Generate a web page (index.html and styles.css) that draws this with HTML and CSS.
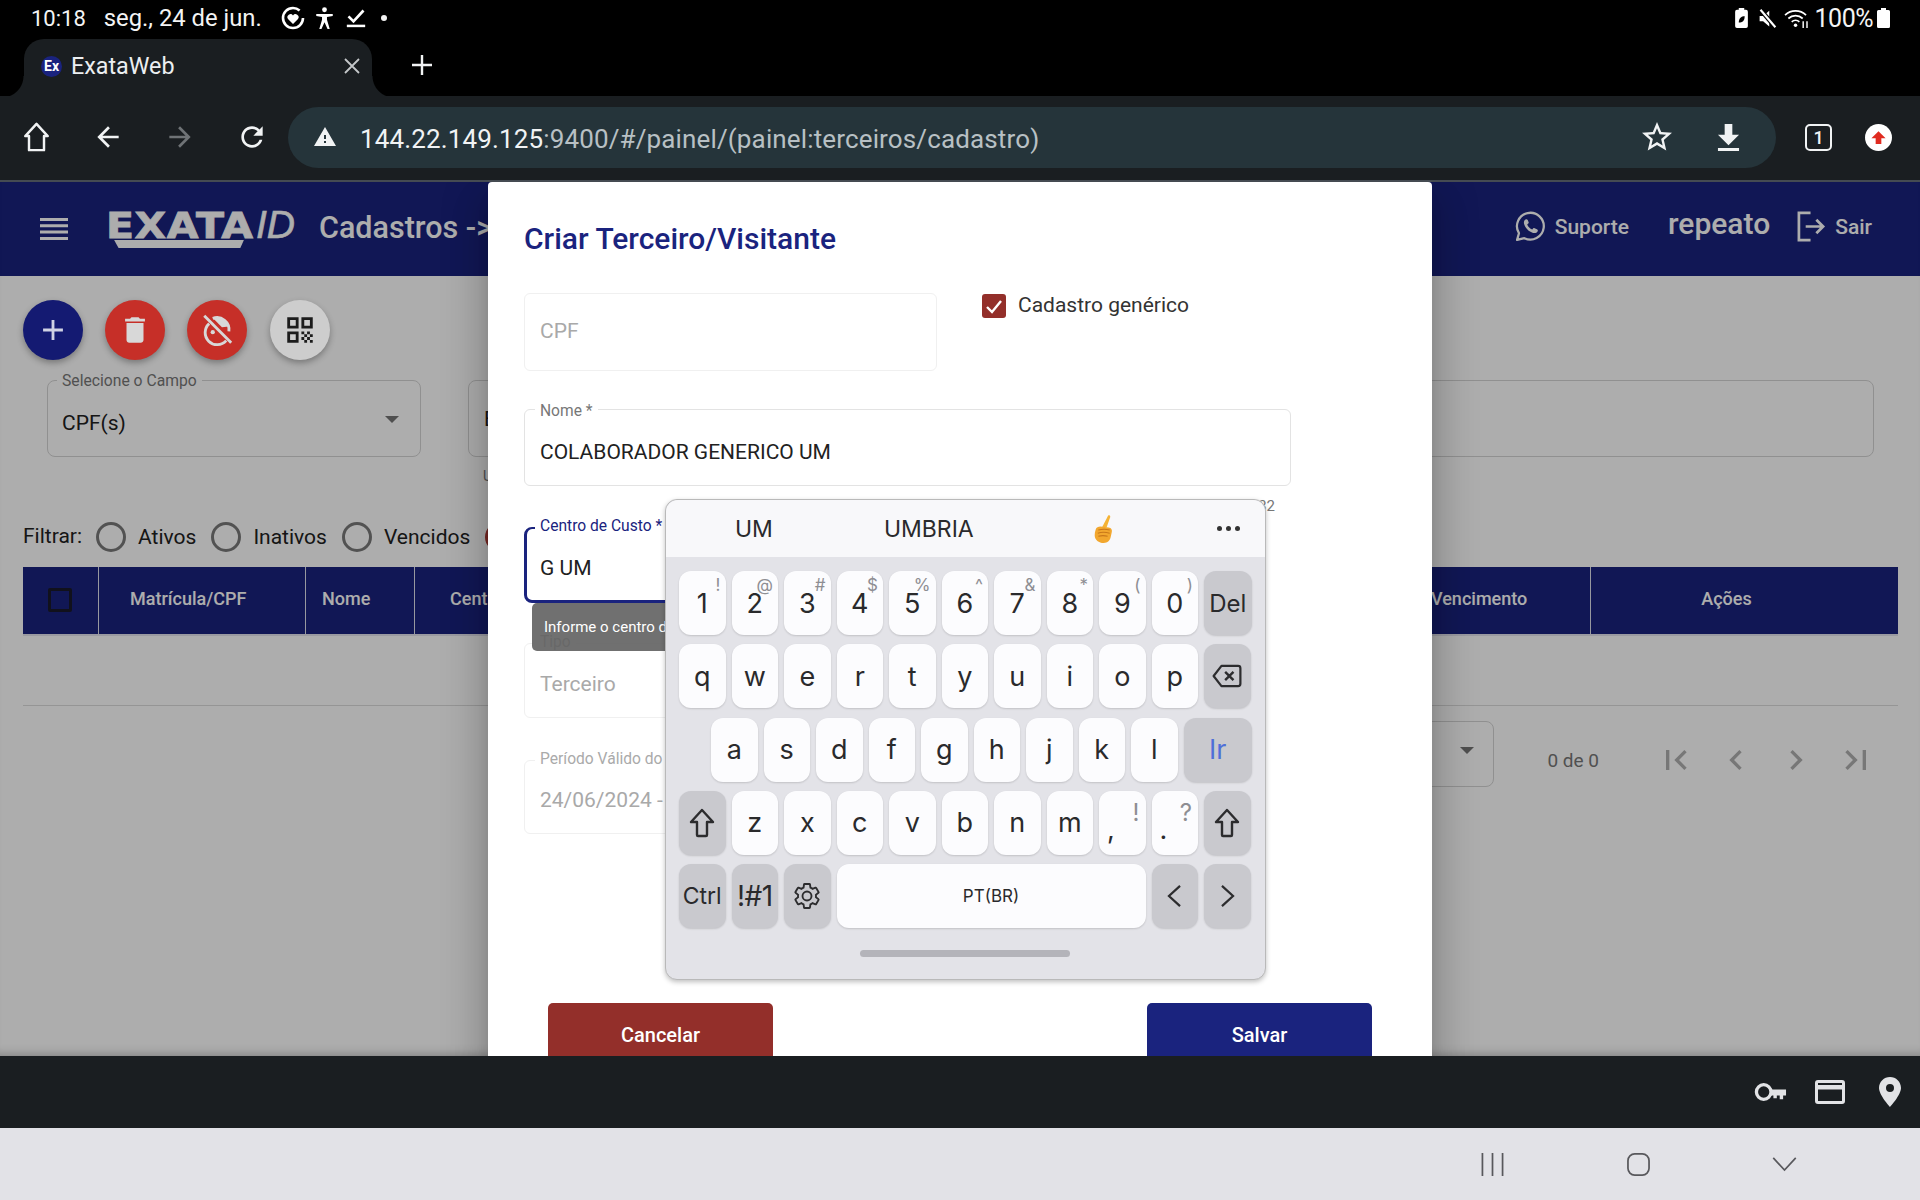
FILE: index.html
```html
<!DOCTYPE html>
<html lang="pt-BR">
<head>
  <meta charset="UTF-8">
  <meta name="viewport" content="width=device-width, initial-scale=1.0">
  <title>ExataWeb</title>
  <link rel="stylesheet" href="styles.css">
</head>
<body>

  <!-- Android status bar -->
  <div class="status-bar">
    <span class="clock">10:18</span>
    <span class="date">seg., 24 de jun.</span>
    <svg class="st-ico st-heart" viewBox="0 0 24 24"><circle cx="12" cy="12" r="10" fill="none" stroke="#fff" stroke-width="2.600" stroke-dasharray="54 9"/><path d="M12 18l-5-5a3 3 0 0 1 5-3.500 3 3 0 0 1 5 3.500z" fill="#fff"/></svg>
    <svg class="st-ico st-person" viewBox="0 0 18 24"><circle cx="9" cy="3" r="2.600" fill="#fff"/><path d="M0 7.500h18v2.200l-6.300 1.200V14l3 10h-2.400L9 16.500 5.700 24H3.300l3-10v-3.100L0 9.700z" fill="#fff"/></svg>
    <svg class="st-ico st-check" viewBox="0 0 24 24"><path d="M3 10l6 6L21 3" fill="none" stroke="#fff" stroke-width="3.200"/><path d="M1 20h22v3H1z" fill="#fff"/></svg>
    <span class="st-dot"></span>
    <div class="status-right">
      <svg class="st-batt-leaf" viewBox="0 0 14 22"><path d="M4 2V0h6v2h2a2 2 0 0 1 2 2v16a2 2 0 0 1-2 2H2a2 2 0 0 1-2-2V4a2 2 0 0 1 2-2z" fill="#fff"/><path d="M4 16c0-5 3-7 6.500-7 0 5-2.500 7-6.500 7z" fill="#000"/></svg>
      <svg class="st-mute" viewBox="0 0 24 24"><path d="M3 9h4l7-6v18l-7-6H3z" fill="#fff"/><path d="M4 2l17 20" stroke="#000" stroke-width="5"/><path d="M4 2l17 20" stroke="#fff" stroke-width="2.400"/></svg>
      <svg class="st-wifi" viewBox="0 0 26 22"><g fill="none" stroke="#fff" stroke-width="1.800"><path d="M1 7.500a16 16 0 0 1 22 0"/><path d="M4.500 11a11 11 0 0 1 15 0"/><path d="M8 14.500a6 6 0 0 1 8 0"/></g><circle cx="12" cy="18" r="1.800" fill="#fff"/><path d="M20 14v7M24 21v-7" stroke="#fff" stroke-width="1.500"/></svg>
      <span class="batt-text">100%</span>
      <svg class="st-batt" viewBox="0 0 13 20"><path d="M4 0h5v2h2.500A1.500 1.500 0 0 1 13 3.500v15a1.500 1.500 0 0 1-1.500 1.500h-10A1.500 1.500 0 0 1 0 18.500v-15A1.500 1.500 0 0 1 1.500 2H4z" fill="#fff"/></svg>
    </div>
  </div>

  <!-- Browser tabs -->
  <div class="tab-strip">
    <div class="tab">
      <span class="favicon">Ex</span>
      <span class="tab-title">ExataWeb</span>
      <svg class="tab-close" viewBox="0 0 16 16"><path d="M1 1l14 14M15 1L1 15" stroke="#c4c7c9" stroke-width="1.800"/></svg>
    </div>
    <svg class="tab-new" viewBox="0 0 22 22"><path d="M11 1v20M1 11h20" stroke="#f1f3f4" stroke-width="2.400"/></svg>
  </div>

  <!-- Browser toolbar -->
  <div class="toolbar">
    <svg class="tb-home" viewBox="0 0 28 32"><path d="M14 2L2 15h4v15h16V15h4z" fill="none" stroke="#f1f3f4" stroke-width="2.600" stroke-linejoin="round"/></svg>
    <svg class="tb-nav" viewBox="0 0 24 24"><path fill="#f1f3f4" d="M20 11H7.830l5.590-5.590L12 4l-8 8 8 8 1.410-1.410L7.830 13H20v-2z"/></svg>
    <svg class="tb-nav" viewBox="0 0 24 24"><path fill="#6f7376" d="M12 4l-1.410 1.410L16.170 11H4v2h12.170l-5.580 5.590L12 20l8-8z"/></svg>
    <svg class="tb-nav" viewBox="0 0 24 24"><path fill="#f1f3f4" d="M17.650 6.350C16.200 4.900 14.210 4 12 4c-4.420 0-7.990 3.580-7.990 8s3.570 8 7.990 8c3.730 0 6.840-2.550 7.730-6h-2.080c-.82 2.330-3.040 4-5.650 4-3.310 0-6-2.690-6-6s2.690-6 6-6c1.660 0 3.140.69 4.220 1.780L13 11h7V4l-2.350 2.350z"/></svg>
    <div class="url-bar">
      <svg class="url-warn" viewBox="0 0 24 24"><path fill="#f1f3f4" d="M1 21h22L12 2 1 21zm12-3h-2v-2h2v2zm0-4h-2v-4h2v4z"/></svg>
      <span class="url-text"><span class="url-host">144.22.149.125</span>:9400/#/painel/(painel:terceiros/cadastro)</span>
      <svg class="url-star" viewBox="0 0 24 24"><path fill="#f1f3f4" d="M22 9.240l-7.190-.62L12 2 9.190 8.630 2 9.240l5.460 4.730L5.820 21 12 17.270 18.180 21l-1.630-7.030L22 9.240zM12 15.400l-3.760 2.270 1-4.280-3.320-2.880 4.380-.38L12 6.100l1.710 4.040 4.380.38-3.320 2.880 1 4.280L12 15.400z"/></svg>
      <svg class="url-down" viewBox="0 0 24 28"><path fill="#f1f3f4" d="M8 0h8v11h7L12 22 1 11h7zM1 25h22v3H1z"/></svg>
    </div>
    <div class="tab-count">1</div>
    <div class="update-btn"><svg viewBox="0 0 24 24"><path fill="#e02b20" d="M12 3L2 13h6v8h8v-8h6z"/></svg></div>
  </div>

  <div class="page">

    <div class="app-header">
      <svg class="hamburger" viewBox="0 0 28 22"><path d="M0 0h28v3H0zM0 6.300h28v3H0zM0 12.600h28v3H0zM0 19h28v3H0z" fill="#fff"/></svg>
      <div class="logo">
        <div class="logo-exata">
          <span class="logo-word">EXATA</span>
          <svg class="logo-wedge" viewBox="0 0 146 9"><polygon points="0,0 146,0 142,9 5,9" fill="#fff"/></svg>
        </div>
        <span class="logo-id">ID</span>
      </div>
      <span class="crumb">Cadastros -&gt;</span>
      <div class="header-right">
        <svg class="wa-ico" viewBox="0 0 32 32"><path d="M3 29l1.800-6.500A13 13 0 1 1 10 27.300z" fill="none" stroke="#fff" stroke-width="2.200" stroke-linejoin="round"/><path d="M11.500 9c-1.500.8-2.300 2.500-1.700 4.500 1.200 4 4.600 7.400 8.700 8.700 2 .6 3.700-.2 4.500-1.700.4-.8-.1-1.400-.8-1.800l-2.200-1.100c-.6-.3-1.100-.2-1.500.3l-.8 1c-2.200-.8-4-2.600-4.900-4.900l1-.8c.5-.4.6-.9.300-1.500L13.300 9.800c-.4-.7-1-1.200-1.800-.8z" fill="#fff"/></svg>
        <span class="support">Suporte</span>
        <span class="user-name">repeato</span>
        <svg class="logout-ico" viewBox="0 0 30 32"><path d="M14 2H2v28h12" fill="none" stroke="#fff" stroke-width="2.800"/><path d="M9 16h18M20 9l7 7-7 7" fill="none" stroke="#fff" stroke-width="2.800"/></svg>
        <span class="logout">Sair</span>
      </div>
    </div>

    <div class="content">
      <div class="fabs">
        <div class="fab fab-blue"><svg viewBox="0 0 24 24"><path fill="#d0d2e4" d="M19 13h-6v6h-2v-6H5v-2h6V5h2v6h6v2z"/></svg></div>
        <div class="fab fab-red"><svg viewBox="0 0 24 24"><path fill="#d8d8d8" d="M6 19c0 1.100.9 2 2 2h8c1.100 0 2-.9 2-2V7H6v12zM19 4h-3.500l-1-1h-5l-1 1H5v2h14V4z"/></svg></div>
        <div class="fab fab-red"><svg viewBox="0 0 24 24"><g fill="none" stroke="#d8d8d8" stroke-width="2"><path d="M6.500 7.500a8.500 8.500 0 1 0 12 12"/><path d="M9 3.800A8.500 8.500 0 0 1 20.400 13"/><path d="M3 2l19 19"/></g><path fill="#d8d8d8" d="M9 3.500c4-1.500 9 0 11.500 6L15.500 10z"/><circle cx="9" cy="13.500" r="1.500" fill="#d8d8d8"/></svg></div>
        <div class="fab fab-light"><svg viewBox="0 0 24 24"><path fill="#1c1c1c" d="M3 11h8V3H3v8zm2-6h4v4H5V5zM3 21h8v-8H3v8zm2-6h4v4H5v-4zM13 3v8h8V3h-8zm6 6h-4V5h4v4zM13 13h2v2h-2zM17 13h2v2h-2zM15 15h2v2h-2zM19 15h2v2h-2zM13 17h2v2h-2zM17 17h2v2h-2zM15 19h2v2h-2zM19 19h2v2h-2z"/></svg></div>
      </div>

      <div class="search-row">
        <div class="search-select">
          <span class="outline-label">Selecione o Campo</span>
          <span>CPF(s)</span>
          <span class="caret"></span>
        </div>
        <div class="search-col">
          <div class="search-input">Busca</div>
          <div class="search-hint">Use vírgula para separar</div>
        </div>
      </div>

      <div class="filter-row">
        <span class="filter-title">Filtrar:</span>
        <span class="radio"></span><span class="radio-text">Ativos</span>
        <span class="radio"></span><span class="radio-text">Inativos</span>
        <span class="radio"></span><span class="radio-text">Vencidos</span>
        <span class="radio radio-red"></span>
      </div>

      <div class="table-head">
        <div class="th th-check"><span class="head-box"></span></div>
        <div class="th th-mat">Matrícula/CPF</div>
        <div class="th th-nome">Nome</div>
        <div class="th th-centro">Cent</div>
        <div class="th th-venc">Vencimento</div>
        <div class="th th-acoes">Ações</div>
      </div>
      <div class="table-body"></div>

      <div class="paginator">
        <div class="page-size"><span class="caret"></span></div>
        <span class="page-range">0 de 0</span>
        <svg class="pg-ico" viewBox="0 0 24 24"><path d="M18.410 16.590L13.820 12l4.590-4.590L17 6l-6 6 6 6zM6 6h2v12H6z"/></svg>
        <svg class="pg-ico" viewBox="0 0 24 24"><path d="M15.410 7.410L14 6l-6 6 6 6 1.410-1.410L10.830 12z"/></svg>
        <svg class="pg-ico" viewBox="0 0 24 24"><path d="M10 6L8.590 7.410 13.170 12l-4.580 4.590L10 18l6-6z"/></svg>
        <svg class="pg-ico" viewBox="0 0 24 24"><path d="M5.590 7.410L10.180 12l-4.590 4.590L7 18l6-6-6-6zM16 6h2v12h-2z"/></svg>
      </div>
    </div>

    <div class="backdrop"></div>

    <!-- Dialog -->
    <div class="modal">
      <h2 class="modal-title">Criar Terceiro/Visitante</h2>

      <div class="form-row">
        <div class="field field-cpf field-off"><span class="field-value">CPF</span></div>
        <label class="generic-check">
          <span class="check-box"><svg viewBox="0 0 24 24"><path d="M5 13l5 5 9-11" fill="none" stroke="#fff" stroke-width="2.400"/></svg></span>
          Cadastro genérico
        </label>
      </div>

      <div class="field field-nome">
        <span class="field-label">Nome *</span>
        <span class="field-value">COLABORADOR GENERICO UM</span>
        <span class="field-count">32</span>
      </div>

      <div class="field field-custo">
        <span class="field-label label-focus">Centro de Custo *</span>
        <span class="field-value">G UM</span>
        <div class="tooltip">Informe o centro de custo</div>
      </div>

      <div class="field field-tipo field-off">
        <span class="field-label">Tipo</span>
        <span class="field-value">Terceiro</span>
      </div>

      <div class="field field-periodo field-off">
        <span class="field-label">Período Válido do</span>
        <span class="field-value">24/06/2024 -</span>
      </div>

      <div class="modal-actions">
        <button class="btn btn-cancel">Cancelar</button>
        <button class="btn btn-save">Salvar</button>
      </div>
    </div>

    <!-- Floating Samsung keyboard -->
    <div class="keyboard">
      <div class="suggestions">
        <span class="sug sug-um">UM</span>
        <span class="sug sug-umbria">UMBRIA</span>
        <svg class="sug-emoji" viewBox="0 0 20 27"><path d="M14.500.4c1.400-.6 2.300.4 1.900 1.800L13 12H8.500z" fill="#f5b335"/><path d="M2.500 14c.6-2.300 2.500-3 4.500-3l8 1c2.500.5 3.500 2 3 4.500l-1 4.500c-.6 3.600-3 6-6.800 6C5.500 27 1.500 24 1.500 19.500c0-2 .4-3.800 1-5.500z" fill="#f2a72e"/><path d="M5 14.500c3.500-1 7.500-1 11 0M4.500 17.500c3.500-1 7.500-1 11.500 0M5 20.500c3-.8 6-.8 9 0" stroke="#c9781a" stroke-width="1" fill="none"/></svg>
        <span class="sug-more"><i></i><i></i><i></i></span>
      </div>
      <div class="keys">
        <div class="kb-row">
          <div class="key">1<span class="hint">!</span></div>
          <div class="key">2<span class="hint">@</span></div>
          <div class="key">3<span class="hint">#</span></div>
          <div class="key">4<span class="hint">$</span></div>
          <div class="key">5<span class="hint">%</span></div>
          <div class="key">6<span class="hint">^</span></div>
          <div class="key">7<span class="hint">&amp;</span></div>
          <div class="key">8<span class="hint">*</span></div>
          <div class="key">9<span class="hint">(</span></div>
          <div class="key">0<span class="hint">)</span></div>
          <div class="key key-fn key-del">Del</div>
        </div>
        <div class="kb-row">
          <div class="key">q</div><div class="key">w</div><div class="key">e</div><div class="key">r</div><div class="key">t</div>
          <div class="key">y</div><div class="key">u</div><div class="key">i</div><div class="key">o</div><div class="key">p</div>
          <div class="key key-fn"><svg class="kb-ico kb-back" viewBox="0 0 32 26"><path d="M10 2h18a2.500 2.500 0 0 1 2.500 2.500v17A2.500 2.500 0 0 1 28 24H10L1.500 13z" fill="none" stroke="#2c2c2e" stroke-width="2.400" stroke-linejoin="round"/><path d="M14 8.500l9 9M23 8.500l-9 9" stroke="#2c2c2e" stroke-width="2.600"/></svg></div>
        </div>
        <div class="kb-row kb-row-home">
          <div class="key">a</div><div class="key">s</div><div class="key">d</div><div class="key">f</div><div class="key">g</div>
          <div class="key">h</div><div class="key">j</div><div class="key">k</div><div class="key">l</div>
          <div class="key key-fn key-go">Ir</div>
        </div>
        <div class="kb-row">
          <div class="key key-fn"><svg class="kb-ico kb-shift" viewBox="0 0 26 30"><path d="M13 2L2 14h6v13a1 1 0 0 0 1 1h8a1 1 0 0 0 1-1V14h6z" fill="none" stroke="#2c2c2e" stroke-width="2.400" stroke-linejoin="round"/></svg></div>
          <div class="key">z</div><div class="key">x</div><div class="key">c</div><div class="key">v</div>
          <div class="key">b</div><div class="key">n</div><div class="key">m</div>
          <div class="key key-punct"><span class="punct-mark">,</span><span class="hint hint-big">!</span></div>
          <div class="key key-punct"><span class="punct-mark">.</span><span class="hint hint-big">?</span></div>
          <div class="key key-fn"><svg class="kb-ico kb-shift" viewBox="0 0 26 30"><path d="M13 2L2 14h6v13a1 1 0 0 0 1 1h8a1 1 0 0 0 1-1V14h6z" fill="none" stroke="#2c2c2e" stroke-width="2.400" stroke-linejoin="round"/></svg></div>
        </div>
        <div class="kb-row">
          <div class="key key-fn key-ctrl">Ctrl</div>
          <div class="key key-fn key-sym">!#1</div>
          <div class="key key-fn"><svg class="kb-ico kb-gear" viewBox="0 0 24 24"><path fill="none" stroke="#2c2c2e" stroke-width="1.500" d="M19.140 12.940c.04-.3.06-.61.06-.94 0-.32-.02-.64-.07-.94l2.030-1.580c.18-.14.23-.41.12-.61l-1.920-3.320c-.12-.22-.37-.29-.59-.22l-2.390.96c-.5-.38-1.030-.7-1.620-.94l-.36-2.540c-.04-.24-.24-.41-.48-.41h-3.840c-.24 0-.43.17-.47.41l-.36 2.540c-.59.24-1.130.57-1.620.94l-2.390-.96c-.22-.08-.47 0-.59.22L2.740 8.870c-.12.21-.08.47.12.61l2.030 1.580c-.05.3-.09.63-.09.94s.02.64.07.94l-2.030 1.580c-.18.14-.23.41-.12.61l1.920 3.320c.12.22.37.29.59.22l2.390-.96c.5.38 1.030.7 1.620.94l.36 2.540c.05.24.24.41.48.41h3.840c.24 0 .44-.17.47-.41l.36-2.540c.59-.24 1.130-.56 1.620-.94l2.390.96c.22.08.47 0 .59-.22l1.920-3.320c.12-.22.07-.47-.12-.61l-2.010-1.580zM12 15.600c-1.980 0-3.600-1.620-3.600-3.600s1.620-3.600 3.600-3.600 3.600 1.620 3.600 3.600-1.620 3.600-3.600 3.600z"/></svg></div>
          <div class="key key-space">PT(BR)</div>
          <div class="key key-fn"><svg class="kb-ico kb-arrow" viewBox="0 0 16 26"><path d="M14 2L2 13l12 11" fill="none" stroke="#2c2c2e" stroke-width="2.400"/></svg></div>
          <div class="key key-fn"><svg class="kb-ico kb-arrow" viewBox="0 0 16 26"><path d="M2 2l12 11L2 24" fill="none" stroke="#2c2c2e" stroke-width="2.400"/></svg></div>
        </div>
      </div>
      <div class="kb-handle"></div>
    </div>
  </div>

  <!-- Browser bottom bar -->
  <div class="bottom-bar">
    <svg class="bb-key" viewBox="0 0 34 22"><circle cx="10" cy="11" r="7.500" fill="none" stroke="#e2e3e6" stroke-width="3.400"/><path d="M17 8.500h16v6h-3v4h-3.500v-4h-3v3H20v-3h-3z" fill="#e2e3e6"/></svg>
    <svg class="bb-card" viewBox="0 0 30 24"><rect x="1.500" y="1.500" width="27" height="21" rx="1.500" fill="none" stroke="#e2e3e6" stroke-width="3"/><path d="M2 5h26v4.500H2z" fill="#e2e3e6"/></svg>
    <svg class="bb-pin" viewBox="0 0 22 30"><path fill="#e2e3e6" fill-rule="evenodd" d="M11 0C5 0 0 4.800 0 11c0 7 11 19 11 19s11-12 11-19C22 4.800 17 0 11 0zm0 15a4 4 0 1 1 0-8 4 4 0 0 1 0 8z"/></svg>
  </div>

  <!-- Android nav bar -->
  <div class="nav-bar">
    <svg class="nav-recent" viewBox="0 0 24 24"><path d="M1.500 0v24M12 0v24M22.500 0v24" stroke="#58585c" stroke-width="1.800"/></svg>
    <svg class="nav-home" viewBox="0 0 24 24"><rect x="1" y="1" width="22" height="22" rx="7" fill="none" stroke="#58585c" stroke-width="1.800"/></svg>
    <svg class="nav-back" viewBox="0 0 26 16"><path d="M1 1l12 13L25 1" fill="none" stroke="#58585c" stroke-width="1.800"/></svg>
  </div>

</body>
</html>
```

FILE: styles.css
```css
* {
  box-sizing: border-box;
}

html, body {
  margin: 0;
  height: 1200px;
}

body {
  display: flex;
  flex-direction: column;
  width: 1920px;
  overflow: hidden;
  font-family: Roboto, "Liberation Sans", sans-serif;
  background-color: #000;
  color: #212121;
}

svg {
  display: block;
  flex-shrink: 0;
}

/* status bar */
.status-bar {
  display: flex;
  align-items: center;
  height: 36px;
  padding: 0 30px 0 31px;
  font-size: 22px;
  color: #f4f4f4;
}

.date {
  margin-left: 18px;
  font-size: 23.8px;
}

.st-ico {
  width: 22px;
  height: 22px;
}

.st-heart {
  margin-left: 19px;
  width: 24px;
  height: 24px;
}

.st-person {
  margin-left: 11px;
  width: 17px;
}

.st-check {
  margin-left: 13px;
  width: 20px;
}

.st-dot {
  width: 6px;
  height: 6px;
  margin-left: 15px;
  border-radius: 50%;
  background-color: #f4f4f4;
}

.status-right {
  display: flex;
  align-items: center;
  margin-left: auto;
}

.st-batt-leaf {
  width: 13px;
  height: 20px;
}

.st-mute {
  width: 21px;
  height: 21px;
  margin-left: 9px;
}

.st-wifi {
  width: 25px;
  height: 21px;
  margin-left: 6px;
}

.batt-text {
  margin-left: 6px;
  font-size: 25px;
  letter-spacing: -0.5px;
}

.st-batt {
  width: 13px;
  height: 20px;
  margin-left: 4px;
}

/* tab strip */
.tab-strip {
  display: flex;
  align-items: flex-end;
  height: 60px;
}

.tab {
  position: relative;
  display: flex;
  align-items: center;
  width: 348px;
  height: 57px;
  margin-left: 24px;
  padding: 0 12px 0 17px;
  border-radius: 20px 20px 0 0;
  background-color: #1a1e21;
}

.tab::before, .tab::after {
  content: "";
  position: absolute;
  bottom: 0;
  width: 22px;
  height: 20px;
}

.tab::before {
  left: -22px;
  background: radial-gradient(circle at 0 0, #000 21px, #1a1e21 22px);
}

.tab::after {
  right: -22px;
  background: radial-gradient(circle at 100% 0, #000 21px, #1a1e21 22px);
}

.favicon {
  display: flex;
  align-items: center;
  justify-content: center;
  width: 21px;
  height: 21px;
  margin-bottom: 3px;
  border-radius: 50%;
  background-color: #1a237e;
  color: #fff;
  font-size: 14px;
  font-weight: 700;
}

.tab-title {
  margin: 0 0 4px 9px;
  font-size: 23.3px;
  color: #eceff1;
}

.tab-close {
  width: 16px;
  height: 16px;
  margin: 0 0 3px auto;
}

.tab-new {
  width: 22px;
  height: 22px;
  margin: 0 0 20px 39px;
}

/* toolbar */
.toolbar {
  display: flex;
  align-items: center;
  height: 86px;
  padding: 0 0 2px 23px;
  border-bottom: 2px solid #454b52;
  background-color: #1a1e21;
}

.tb-home {
  width: 27px;
  height: 30px;
  margin-right: 2px;
}

.tb-nav {
  width: 32px;
  height: 32px;
  margin-left: 40px;
}

.url-bar {
  display: flex;
  align-items: center;
  width: 1488px;
  height: 61px;
  margin-left: 20px;
  padding: 0 36px 0 25px;
  border-radius: 31px;
  background-color: #25343a;
}

.url-warn {
  width: 24px;
  height: 24px;
}

.url-text {
  margin: 3px 0 0 23px;
  font-size: 26px;
  letter-spacing: 0.14px;
  color: #b8c0c4;
  white-space: nowrap;
}

.url-host {
  color: #f1f3f4;
}

.url-star {
  width: 36px;
  height: 36px;
  margin-left: auto;
  margin-right: 1px;
}

.url-down {
  width: 23px;
  height: 27px;
  margin-left: 41px;
}

.tab-count {
  display: flex;
  align-items: center;
  justify-content: center;
  width: 27px;
  height: 27px;
  margin-left: 29px;
  border: 2.5px solid #f1f3f4;
  border-radius: 5px;
  color: #f1f3f4;
  font-size: 18px;
  font-weight: 500;
}

.update-btn {
  display: flex;
  align-items: center;
  justify-content: center;
  width: 27px;
  height: 27px;
  margin-left: 33px;
  border-radius: 50%;
  background-color: #fff;
}

.update-btn svg {
  width: 17px;
  height: 17px;
}

/* page behind the dialog */
.page {
  position: relative;
  height: 874px;
  overflow: hidden;
  background-color: #fff;
}

.app-header {
  display: flex;
  align-items: center;
  height: 94px;
  padding: 0 48px 0 40px;
  background-color: #1a237e;
  color: #fff;
}

.hamburger {
  width: 28px;
  height: 22px;
}

.logo {
  display: flex;
  align-items: flex-start;
  margin-left: 38px;
}

.logo-exata {
  display: flex;
  flex-direction: column;
  width: 149px;
}

.logo-word {
  font-family: "DejaVu Sans", sans-serif;
  font-size: 36px;
  font-weight: 700;
  line-height: 30px;
  letter-spacing: 0.5px;
  white-space: nowrap;
  transform: scaleX(1.14);
  transform-origin: left center;
  -webkit-text-stroke: 0.8px #fff;
}

.logo-wedge {
  width: 146px;
  height: 8px;
  margin-top: -1px;
}

.logo-id {
  font-family: "Liberation Sans", sans-serif;
  font-size: 39px;
  font-style: italic;
  line-height: 28px;
  margin-left: 1px;
  -webkit-text-stroke: 0.6px #fff;
}

.crumb {
  margin: 0 0 3px 24px;
  font-size: 30.5px;
  font-weight: 500;
  white-space: nowrap;
}

.header-right {
  display: flex;
  align-items: center;
  margin: 0 0 5px auto;
}

.wa-ico {
  width: 33px;
  height: 33px;
}

.support, .logout {
  font-size: 21px;
  font-weight: 500;
}

.support {
  margin-left: 8px;
}

.user-name {
  margin: -6px 0 0 39px;
  font-size: 30px;
  font-weight: 500;
}

.logout-ico {
  width: 31px;
  height: 31px;
  margin-left: 26px;
}

.logout {
  margin-left: 8px;
}

.content {
  padding: 24px 22px 0 23px;
}

.fabs {
  position: relative;
  z-index: 2;
  display: flex;
  gap: 22.2px;
}

.fab {
  display: flex;
  align-items: center;
  justify-content: center;
  width: 60px;
  height: 60px;
  border-radius: 50%;
  box-shadow: 0 3px 6px rgba(0, 0, 0, 0.3);
}

.fab svg {
  width: 34px;
  height: 34px;
}

.fab-blue {
  background-color: #141a72;
}

.fab-red {
  background-color: #c62f28;
}

.fab-light {
  background-color: #cdcdcd;
}

.search-row {
  display: flex;
  gap: 47px;
  margin: 20px 24px 0 24px;
}

.search-select, .search-input, .page-size {
  position: relative;
  display: flex;
  align-items: center;
  height: 77px;
  border: 1px solid #d5d5d5;
  border-radius: 8px;
  font-size: 21px;
}

.search-select {
  width: 374px;
  padding: 9px 14px 0;
}

.outline-label {
  position: absolute;
  top: -9px;
  left: 9px;
  padding: 0 5px;
  background-color: #fff;
  font-size: 15.7px;
  line-height: 18px;
  color: #777;
}

.caret {
  position: absolute;
  top: 35px;
  right: 21px;
  border: 7px solid transparent;
  border-top: 7px solid #757575;
  border-bottom: 0;
}

.search-col {
  flex: 1;
}

.search-input {
  padding: 0 15px;
}

.search-hint {
  margin: 10px 0 0 15px;
  font-size: 14px;
  line-height: 18px;
  color: #777;
}

.filter-row {
  display: flex;
  align-items: center;
  height: 30px;
  margin-top: 37px;
  font-size: 21px;
}

.filter-title {
  margin: -2px 14px 0 0;
}

.radio {
  width: 30px;
  height: 30px;
  border: 3px solid #7a7a7a;
  border-radius: 50%;
}

.radio-text {
  margin: -1px 15px 0 12px;
}

.radio-red {
  border-color: #b03a34;
}

.table-head {
  display: flex;
  height: 69px;
  margin-top: 15px;
  border-bottom: 2px solid #e4e4ee;
  background-color: #1a237e;
  color: #fff;
  font-size: 18px;
  font-weight: 500;
}

.th {
  display: flex;
  align-items: center;
  height: 67px;
  padding-bottom: 4px;
  border-right: 1px solid #dfe0ea;
  white-space: nowrap;
}

.th-check {
  width: 76px;
  padding: 0 0 2px 25px;
}

.head-box {
  width: 24px;
  height: 24px;
  border: 3px solid #1a1a2a;
  border-radius: 2px;
}

.th-mat {
  width: 207px;
  padding-left: 31px;
}

.th-nome {
  width: 109px;
  padding-left: 16px;
}

.th-centro {
  flex: 1;
  padding-left: 35px;
  border-right: 0;
}

.th-venc {
  width: 192px;
  padding-left: 32px;
}

.th-acoes {
  justify-content: center;
  width: 307px;
  padding-right: 36px;
  border-right: 0;
}

.table-body {
  height: 70px;
  border-bottom: 1px solid #dcdcdc;
}

.paginator {
  display: flex;
  align-items: center;
  justify-content: flex-end;
  margin-top: 15px;
  padding-right: 12px;
}

.page-size {
  width: 200px;
  height: 66px;
}

.page-size .caret {
  top: 25px;
  right: 19px;
}

.page-range {
  margin: 12px 47px 0 53px;
  font-size: 19px;
  color: #777;
}

.pg-ico {
  width: 40px;
  height: 40px;
  margin: 12px 10px 0;
  fill: #b0b0b0;
}

.backdrop {
  position: absolute;
  inset: 0;
  z-index: 1;
  background-color: rgba(0, 0, 0, 0.32);
  box-shadow: inset 0 -10px 10px -8px rgba(0, 0, 0, 0.25);
}

/* dialog */
.modal {
  position: absolute;
  top: 0;
  left: 488px;
  z-index: 3;
  width: 944px;
  height: 900px;
  padding: 40px 0 0 36px;
  border-radius: 4px;
  background-color: #fff;
  box-shadow: 0 11px 15px -7px rgba(0, 0, 0, 0.2), 0 24px 38px 3px rgba(0, 0, 0, 0.14), 0 9px 46px 8px rgba(0, 0, 0, 0.12);
}

.modal-title {
  margin: 0;
  font-size: 30px;
  font-weight: 500;
  line-height: 34px;
  color: #1a237e;
}

.form-row {
  display: flex;
  margin-top: 37px;
}

.field {
  position: relative;
  display: flex;
  align-items: center;
  width: 767px;
  height: 77px;
  padding: 6px 15px 0;
  border: 1.5px solid #e3e3e3;
  border-radius: 6px;
  font-size: 21px;
}

.field-off {
  border-color: #f0f0f0;
  color: #a9a9a9;
}

.field-cpf {
  width: 413px;
  height: 78px;
  padding: 0 15px 2px;
}

.field-nome {
  margin-top: 38px;
  padding-top: 8px;
}

.field-custo {
  width: 400px;
  height: 76px;
  margin-top: 41px;
  padding-left: 13px;
  border: 3px solid #1a237e;
  border-top-width: 2px;
  border-radius: 8px;
}

.field-tipo {
  width: 400px;
  height: 75px;
  margin-top: 40px;
}

.field-periodo {
  width: 400px;
  height: 74px;
  margin-top: 42px;
}

.field-label {
  position: absolute;
  top: -8px;
  left: 10px;
  padding: 0 5px;
  background-color: #fff;
  font-size: 15.6px;
  line-height: 18px;
  color: #777;
  white-space: nowrap;
}

.field-off .field-label {
  top: -11px;
  color: #aaa;
}

.field-custo .label-focus {
  top: -12px;
  left: 8px;
  color: #1a237e;
}

.field-value {
  white-space: nowrap;
}

.field-count {
  position: absolute;
  right: 15px;
  bottom: -30px;
  font-size: 15px;
  line-height: 18px;
  color: #777;
}

.tooltip {
  position: absolute;
  top: 74px;
  left: 5px;
  z-index: 1;
  width: 140px;
  height: 48px;
  padding: 0 12px;
  overflow: hidden;
  border-radius: 5px;
  background-color: rgba(97, 97, 97, 0.9);
  color: #fff;
  font-size: 15px;
  line-height: 48px;
  white-space: nowrap;
}

.generic-check {
  display: flex;
  align-items: flex-start;
  align-self: flex-start;
  height: 25px;
  margin: 0 0 0 45px;
  font-size: 21px;
  line-height: 24px;
  color: #333;
}

.check-box {
  width: 24px;
  height: 24px;
  margin: 1px 12px 0 0;
  border-radius: 3px;
  background-color: #932f2a;
}

.modal-actions {
  display: flex;
  justify-content: space-between;
  width: 824px;
  margin: 169px 0 0 24px;
}

.btn {
  width: 225px;
  height: 64px;
  border: none;
  border-radius: 5px;
  color: #fff;
  font-family: inherit;
  font-size: 20px;
  font-weight: 500;
}

.btn-cancel {
  background-color: #932f2a;
}

.btn-save {
  background-color: #1a237e;
}

/* keyboard */
.keyboard {
  position: absolute;
  top: 317px;
  left: 665px;
  z-index: 4;
  width: 601px;
  height: 481px;
  border: 1px solid #b9b9b9;
  border-radius: 12px;
  background-color: #e3e3e8;
  box-shadow: 0 2px 5px rgba(0, 0, 0, 0.25);
  font-family: Inter, Roboto, sans-serif;
  color: #2a2a2c;
}

.suggestions {
  position: relative;
  display: flex;
  align-items: center;
  height: 57px;
  border-radius: 12px 12px 0 0;
  background-color: #f8f8fa;
  font-size: 23px;
}

.sug-um {
  margin-left: 69px;
}

.sug-umbria {
  margin-left: 111px;
}

.sug-emoji {
  width: 23px;
  height: 28px;
  margin-left: 118px;
}

.sug-more {
  display: flex;
  gap: 4px;
  margin-left: 102px;
}

.sug-more i {
  width: 5px;
  height: 5px;
  border-radius: 50%;
  background-color: #333;
}

.keys {
  display: flex;
  flex-direction: column;
  gap: 9.25px;
  padding: 14px 13px 0;
}

.kb-row {
  display: flex;
  gap: 6px;
  height: 64px;
}

.kb-row-home {
  padding-left: 32px;
}

.key {
  position: relative;
  display: flex;
  align-items: center;
  justify-content: center;
  width: 46.5px;
  height: 64px;
  border-radius: 12px;
  background-color: #fcfcfe;
  box-shadow: 0 1px 2px rgba(0, 0, 0, 0.15);
  font-size: 27px;
}

.key-fn {
  background-color: #c9c9ce;
}

.key-del {
  width: 47.5px;
  font-size: 24px;
}

.key-go {
  flex: 1;
  color: #4f6fd8;
}

.key-ctrl {
  font-size: 23px;
}

.key-sym {
  font-size: 28px;
  letter-spacing: -0.5px;
}

.key-space {
  width: 309px;
  font-size: 17px;
}

.hint {
  position: absolute;
  top: 4px;
  right: 5px;
  font-size: 17px;
  line-height: 20px;
  color: #8e8e93;
}

.hint-big {
  top: 7px;
  right: 6px;
  font-size: 24px;
  line-height: 30px;
}

.key-punct {
  justify-content: flex-start;
  padding-left: 8px;
}

.punct-mark {
  margin-top: 14px;
}

.kb-back {
  width: 30px;
  height: 24px;
}

.kb-shift {
  width: 26px;
  height: 30px;
}

.kb-gear {
  width: 30px;
  height: 30px;
}

.kb-arrow {
  width: 15px;
  height: 24px;
}

.kb-handle {
  width: 210px;
  height: 7px;
  margin: 22px 0 0 194px;
  border-radius: 4px;
  background-color: #b4b4ba;
}

/* bottom bars */
.bottom-bar {
  display: flex;
  align-items: center;
  height: 72px;
  padding: 0 19px 0 1754px;
  background-color: #1a1e21;
}

.bb-key {
  width: 33px;
  height: 22px;
}

.bb-card {
  width: 30px;
  height: 24px;
  margin-left: 28px;
}

.bb-pin {
  width: 22px;
  height: 30px;
  margin-left: 34px;
}

.nav-bar {
  display: flex;
  align-items: center;
  height: 72px;
  padding-left: 1481px;
  background-color: #e2e2e7;
}

.nav-recent, .nav-home {
  width: 23px;
  height: 23px;
}

.nav-home {
  margin-left: 123px;
}

.nav-back {
  width: 25px;
  height: 15px;
  margin-left: 122px;
}
```
